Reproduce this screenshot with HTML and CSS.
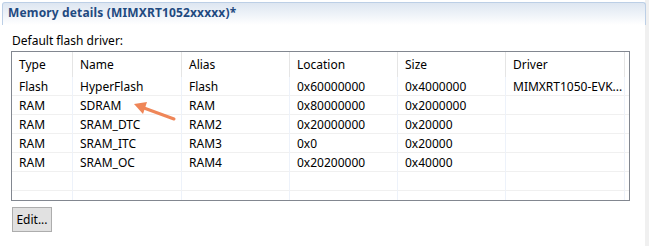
FILE: index.html
```html
<!DOCTYPE html>
<html lang="en">
<head>
    <meta charset="UTF-8">
    <title>Memory details</title>
    <link rel="stylesheet" href="styles.css">
</head>
<body>
    <div class="page">
        <div class="main">
            <div class="section-head">Memory details (MIMXRT1052xxxxx)*</div>
            <div class="section-body">
                <div class="label">Default flash driver:</div>
                <div class="table-box">
                    <table class="mem-table">
                        <colgroup>
                            <col class="c-type">
                            <col class="c-name">
                            <col class="c-mid">
                            <col class="c-mid">
                            <col class="c-mid">
                            <col class="c-driver">
                            <col class="c-fill">
                        </colgroup>
                        <thead>
                            <tr>
                                <th>Type</th><th>Name</th><th>Alias</th><th>Location</th><th>Size</th><th>Driver</th><th></th>
                            </tr>
                        </thead>
                        <tbody>
                            <tr><td>Flash</td><td>HyperFlash</td><td>Flash</td><td>0x60000000</td><td>0x4000000</td><td>MIMXRT1050-EVK...</td><td></td></tr>
                            <tr><td>RAM</td><td>SDRAM</td><td>RAM</td><td>0x80000000</td><td>0x2000000</td><td></td><td></td></tr>
                            <tr><td>RAM</td><td>SRAM_DTC</td><td>RAM2</td><td>0x20000000</td><td>0x20000</td><td></td><td></td></tr>
                            <tr><td>RAM</td><td>SRAM_ITC</td><td>RAM3</td><td>0x0</td><td>0x20000</td><td></td><td></td></tr>
                            <tr><td>RAM</td><td>SRAM_OC</td><td>RAM4</td><td>0x20200000</td><td>0x40000</td><td></td><td></td></tr>
                            <tr><td></td><td></td><td></td><td></td><td></td><td></td><td></td></tr>
                            <tr><td></td><td></td><td></td><td></td><td></td><td></td><td></td></tr>
                        </tbody>
                    </table>
                </div>
                <button class="edit-btn">Edit...</button>
            </div>
            <svg class="arrow" width="60" height="30" viewBox="0 0 60 30">
                <line x1="44" y1="20" x2="14" y2="9" stroke="#ef8658" stroke-width="3" stroke-linecap="round"/>
                <polygon points="4,5 17,3 13,15" fill="#ef8658"/>
            </svg>
        </div>
        <div class="strip"></div>
    </div>
</body>
</html>
```

FILE: styles.css
```css
body {
    margin: 0;
    font-family: "Noto Sans", "Open Sans", sans-serif;
    font-size: 12px;
    color: #000;
    background-color: #fff;
}
.page {
    display: flex;
    height: 246px;
}
.main {
    position: relative;
    width: 643px;
    padding: 2px 0 0 2px;
}
.strip {
    flex: 1;
    background-color: #f0f0f0;
}
.section-head {
    width: 637px;
    height: 22px;
    border: 1px solid #bccfe6;
    border-bottom: none;
    border-radius: 3px 3px 0 0;
    background: linear-gradient(to bottom, #dde6f1, #ffffff);
    color: #1f4a80;
    font-weight: bold;
    line-height: 20px;
    padding-left: 5px;
    letter-spacing: 0.15px;
}
.section-body {
    padding-left: 9px;
}
.label {
    margin-top: 8px;
    padding-left: 1px;
    line-height: 15px;
}
.table-box {
    margin-top: 3px;
    width: 617px;
    height: 148px;
    border: 1px solid #828790;
    overflow: hidden;
}
.mem-table {
    border-collapse: separate;
    border-spacing: 0;
    table-layout: fixed;
    width: 617px;
}
.c-type { width: 61px; }
.c-name { width: 109px; }
.c-mid { width: 108px; }
.c-driver { width: 119px; }
.c-fill { width: 4px; }
.mem-table th {
    height: 25px;
    padding: 0 0 0 7px;
    font-weight: normal;
    text-align: left;
    border-right: 1px solid #e5e5e5;
}
.mem-table td {
    height: 18px;
    padding: 0 0 0 7px;
    white-space: nowrap;
    overflow: hidden;
    border-right: 1px solid #edf2fa;
    border-bottom: 1px solid #f0f0f0;
}
.mem-table th:last-child,
.mem-table td:last-child {
    border-right: none;
}
.edit-btn {
    margin-top: 6px;
    margin-left: 1px;
    width: 40px;
    height: 25px;
    padding: 0;
    font-family: inherit;
    font-size: 12px;
    color: #000;
    background-color: #e1e1e1;
    border: 1px solid #adadad;
}
.arrow {
    position: absolute;
    left: 130px;
    top: 99px;
}
```
